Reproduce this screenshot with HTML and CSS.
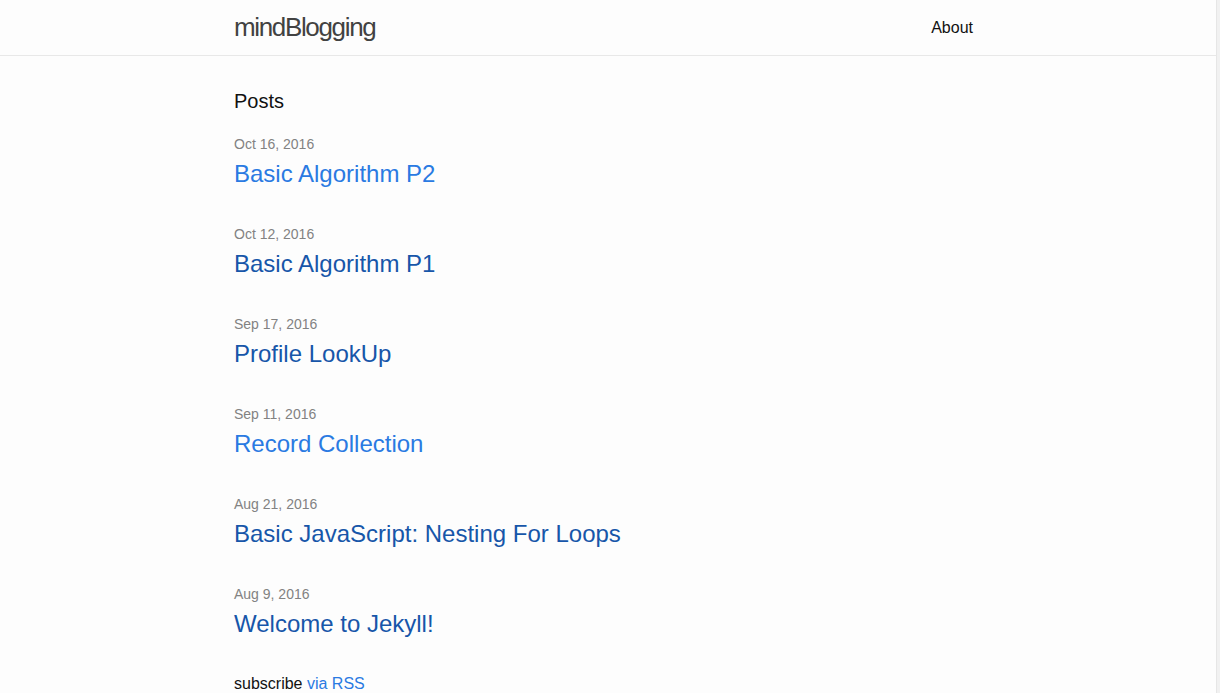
FILE: index.html
```html
<!DOCTYPE html>
<html lang="en">
<head>
<meta charset="utf-8">
<title>mindBlogging</title>
<link rel="stylesheet" href="styles.css">
</head>
<body>
<div class="page">
  <div class="main">
    <header class="site-header">
      <div class="wrapper header-inner">
        <a class="site-title" href="#">mindBlogging</a>
        <nav class="site-nav"><a class="page-link" href="#">About</a></nav>
      </div>
    </header>
    <main class="page-content">
      <div class="wrapper">
        <h1 class="page-heading">Posts</h1>
        <ul class="post-list">
          <li>
            <span class="post-meta">Oct 16, 2016</span>
            <h2><a class="post-link" href="#">Basic Algorithm P2</a></h2>
          </li>
          <li>
            <span class="post-meta">Oct 12, 2016</span>
            <h2><a class="post-link visited" href="#">Basic Algorithm P1</a></h2>
          </li>
          <li>
            <span class="post-meta">Sep 17, 2016</span>
            <h2><a class="post-link visited" href="#">Profile LookUp</a></h2>
          </li>
          <li>
            <span class="post-meta">Sep 11, 2016</span>
            <h2><a class="post-link" href="#">Record Collection</a></h2>
          </li>
          <li>
            <span class="post-meta">Aug 21, 2016</span>
            <h2><a class="post-link visited" href="#">Basic JavaScript: Nesting For Loops</a></h2>
          </li>
          <li>
            <span class="post-meta">Aug 9, 2016</span>
            <h2><a class="post-link visited" href="#">Welcome to Jekyll!</a></h2>
          </li>
        </ul>
        <p class="rss-subscribe">subscribe <a href="#">via RSS</a></p>
      </div>
    </main>
  </div>
  <div class="scrollbar"></div>
</div>
</body>
</html>
```

FILE: styles.css
```css
html, body {
  margin: 0;
  padding: 0;
  height: 100%;
}
body {
  font-family: "Liberation Sans", Arial, sans-serif;
  font-size: 16px;
  line-height: 1.5;
  color: #111111;
  background: #fdfdfd;
  overflow: hidden;
}
a {
  color: #2a7ae2;
  text-decoration: none;
}
.page {
  display: flex;
  height: 693px;
}
.main {
  flex: 1;
  padding-right: 8px;
}
.scrollbar {
  width: 3px;
  border-left: 1px solid #e6e6e6;
  background: #f1f1f1;
}
.wrapper {
  max-width: 740px;
  margin: 0 auto;
}
.site-header {
  height: 55px;
  border-bottom: 1px solid #e8e8e8;
  margin-right: -8px;
  padding-right: 8px;
}
.header-inner {
  display: flex;
  justify-content: space-between;
  align-items: center;
  height: 55px;
}
.site-title {
  font-size: 26px;
  letter-spacing: -1.35px;
  line-height: 55px;
  color: #424242;
}
.page-link {
  color: #111111;
  font-size: 16px;
  line-height: 55px;
  margin-right: 1px;
}
.page-content {
  padding-top: 30px;
}
.page-heading {
  font-size: 20px;
  font-weight: normal;
  line-height: 30px;
  margin: 0 0 18px;
}
.post-list {
  list-style: none;
  margin: 0;
  padding: 0;
}
.post-list li {
  margin-bottom: 32px;
}
.post-meta {
  display: block;
  font-size: 14px;
  line-height: 21px;
  color: #828282;
}
.post-list h2 {
  margin: 1px 0 0;
  font-size: 24px;
  font-weight: normal;
  line-height: 36px;
}
.post-link.visited {
  color: #1756a9;
}
.rss-subscribe {
  margin: 0;
  line-height: 20px;
}
```
